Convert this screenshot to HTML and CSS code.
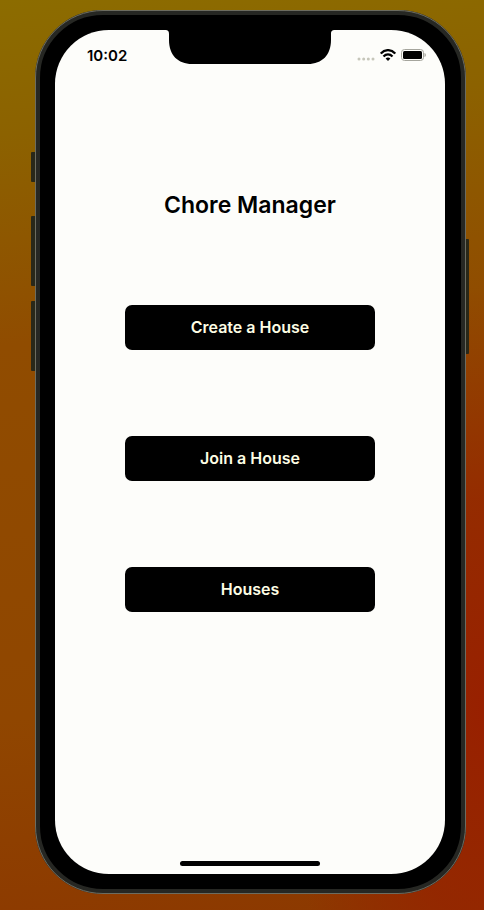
FILE: index.html
```html
<!DOCTYPE html>
<html lang="en">
<head>
<meta charset="utf-8">
<meta name="viewport" content="width=device-width, initial-scale=1">
<title>Chore Manager</title>
<link rel="stylesheet" href="styles.css">
</head>
<body>
<div class="phone">
  <span class="key key-mute"></span>
  <span class="key key-up"></span>
  <span class="key key-down"></span>
  <span class="key key-power"></span>
  <div class="screen">
    <svg class="notch" viewBox="0 0 170 34" aria-hidden="true">
      <path d="M0 0H170C167 0 166 1 166 4V10C166 25 157 34 143 34H27C13 34 4 25 4 10V4C4 1 3 0 0 0Z"/>
    </svg>
    <header class="status">
      <time class="clock">10:02</time>
      <div class="indicators">
        <svg class="signal" width="18" height="4" viewBox="0 0 18 4" fill="#c6c6ba" aria-hidden="true">
          <circle cx="2" cy="2" r="1.5"/><circle cx="6.7" cy="2" r="1.5"/><circle cx="11.3" cy="2" r="1.5"/><circle cx="16" cy="2" r="1.5"/>
        </svg>
        <svg width="16" height="12" viewBox="0 0 16 12" aria-hidden="true">
          <g fill="none" stroke="#000" stroke-width="2.2">
            <path d="M.8 4.6C5-.1 11-.1 15.200 4.600"/>
            <path d="M3.500 7.500C6.100 4.700 9.900 4.700 12.500 7.500"/>
          </g>
          <path d="M5.600 9.500C7 8.300 9 8.300 10.400 9.500L8 12Z"/>
        </svg>
        <svg width="25" height="12" viewBox="0 0 25 12" aria-hidden="true">
          <rect x=".5" y=".5" width="22" height="11" rx="3" fill="none" stroke="#a5a59d"/>
          <rect x="2" y="2" width="19" height="8" rx="1.500"/>
          <path d="M23.500 4C25.300 4.600 25.300 7.400 23.500 8Z" fill="#a5a59d"/>
        </svg>
      </div>
    </header>
    <main class="content">
      <h1 class="title">Chore Manager</h1>
      <button class="action" type="button">Create a House</button>
      <button class="action" type="button">Join a House</button>
      <button class="action" type="button">Houses</button>
    </main>
    <span class="home-bar"></span>
  </div>
</div>
</body>
</html>
```
FILE: styles.css
```css
* {
  box-sizing: border-box;
}

body {
  display: flex;
  min-height: 100vh;
  margin: 0;
  padding: 10px 18px 16px 35px;
  font-family: Inter, "Liberation Sans", sans-serif;
  color: #000;
  background:
    radial-gradient(ellipse 200px 420px at 100% 78%, #982000 0%, #962200c0 50%, #94280000 100%),
    linear-gradient(174deg, #8c6c00 0%, #8c6200 14%, #904c00 36%, #904600 75%, #8c3800 100%);
}

.phone {
  position: relative;
  display: flex;
  flex: 1;
  padding: 15px 16px 15px 15px;
  border: 5px solid #262723;
  border-radius: 68px;
  outline: 1px solid #6c6c60;
  outline-offset: -1px;
  background: #000;
}

.key {
  position: absolute;
  left: -9px;
  width: 4px;
  border-radius: 1px 0 0 1px;
  background: #292819;
}

.key-mute {
  top: 137px;
  height: 30px;
}

.key-up {
  top: 201px;
  height: 70px;
}

.key-down {
  top: 286px;
  height: 70px;
}

.key-power {
  top: 224px;
  right: -8px;
  left: auto;
  width: 3px;
  height: 115px;
  border-radius: 0 1px 1px 0;
}

.screen {
  position: relative;
  display: flex;
  flex: 1;
  flex-direction: column;
  padding-bottom: 8px;
  border-radius: 54px;
  background: #fdfdfa;
}

.notch {
  position: absolute;
  top: 0;
  left: 50%;
  width: 170px;
  height: 34px;
  transform: translateX(-50%);
}

.status {
  display: flex;
  align-items: center;
  justify-content: space-between;
  height: 50px;
  padding: 0 19px 0 32px;
}

.clock {
  font-size: 15px;
  font-weight: 600;
}

.indicators {
  display: flex;
  align-items: center;
  gap: 5px;
}

.signal {
  align-self: flex-end;
}

.content {
  display: flex;
  flex: 1;
  flex-direction: column;
  align-items: center;
  gap: 86px;
  padding-top: 111px;
}

.title {
  margin: 0;
  font-size: 23px;
  font-weight: 600;
  line-height: 28px;
}

.action {
  width: 64%;
  height: 45px;
  padding: 0 0 2px;
  border: 0;
  border-radius: 7px;
  font: 600 16px/20px Inter, "Liberation Sans", sans-serif;
  color: #fdfde4;
  background: #000;
}

.home-bar {
  align-self: center;
  width: 36%;
  height: 5px;
  border-radius: 3px;
  background: #000;
}
```
